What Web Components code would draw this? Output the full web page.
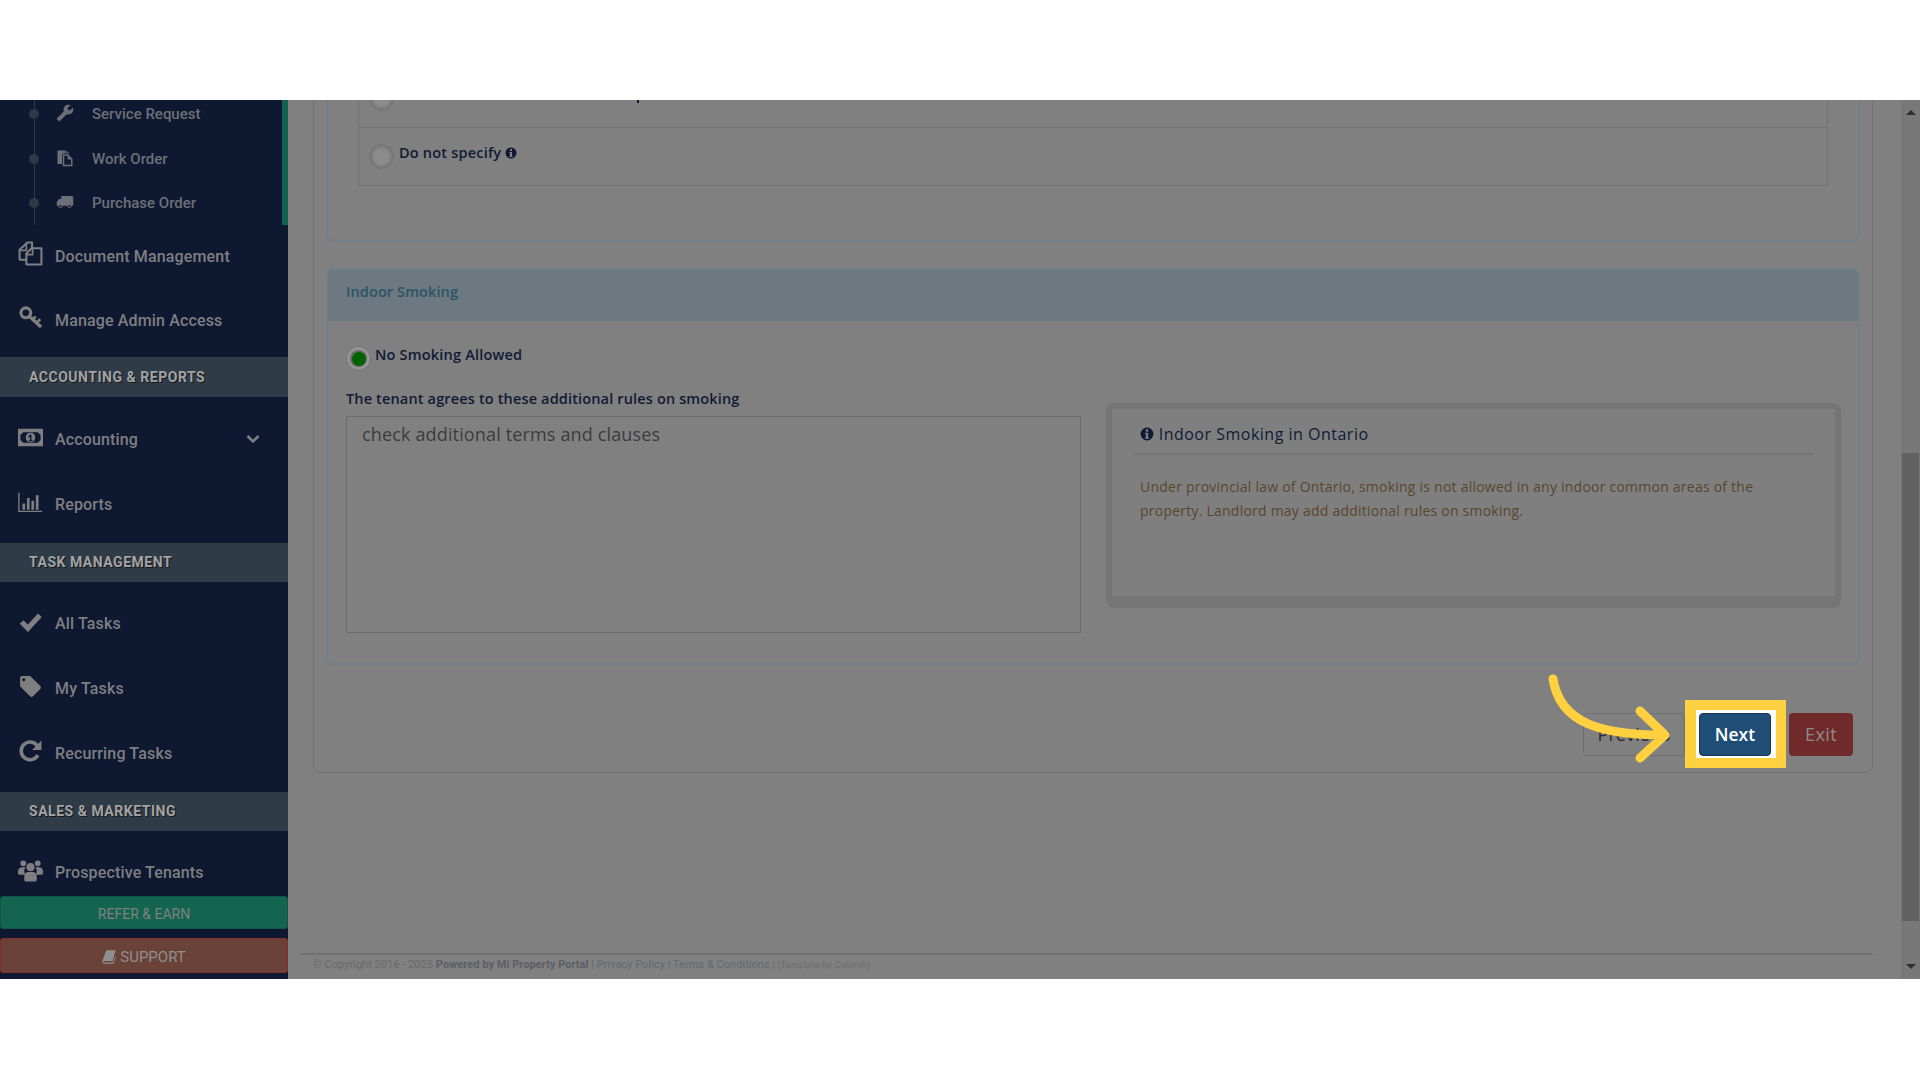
<!DOCTYPE html>
<html lang="en">
<head>
<meta charset="utf-8">
<title>Lease form</title>
<style>
  html, body { margin: 0; height: 1080px; overflow: hidden; background: #fff; }
  body { padding: 100px 0 101px; box-sizing: border-box; font-family: "Open Sans", "Liberation Sans", sans-serif; }
</style>
</head>
<body>
<app-shell>
  <side-nav slot="nav">
    <sub-list>
      <sub-item icon="wrench">Service Request</sub-item>
      <sub-item icon="files">Work Order</sub-item>
      <sub-item icon="truck">Purchase Order</sub-item>
    </sub-list>
    <nav-item icon="docs" style="height:64px">Document Management</nav-item>
    <nav-item icon="key" style="height:64px">Manage Admin Access</nav-item>
    <nav-section style="margin: 5px 0 10px; height: 40px; padding-bottom: 1px">ACCOUNTING &amp; REPORTS</nav-section>
    <nav-item icon="money" chevron>Accounting</nav-item>
    <nav-item icon="chart">Reports</nav-item>
    <nav-section style="margin: 6px 0 9px; height: 39px">TASK MANAGEMENT</nav-section>
    <nav-item icon="check">All Tasks</nav-item>
    <nav-item icon="tag">My Tasks</nav-item>
    <nav-item icon="refresh">Recurring Tasks</nav-item>
    <nav-section style="margin: 6px 0 9px; height: 39px">SALES &amp; MARKETING</nav-section>
    <nav-item icon="users">Prospective Tenants</nav-item>
    <nav-button slot="foot" kind="refer">REFER &amp; EARN</nav-button>
    <nav-button slot="foot" kind="support"><mp-icon name="book" style="width:15px;height:15px;margin-right:3px"></mp-icon>SUPPORT</nav-button>
  </side-nav>

  <lease-page>
    <form-panel plain>
      <radio-table>
        <radio-row first></radio-row>
        <radio-row>Do not specify <mp-icon name="info" style="width:12px;height:12px;vertical-align:-1px"></mp-icon></radio-row>
      </radio-table>
    </form-panel>

    <form-panel heading="Indoor Smoking">
      <smoking-form></smoking-form>
    </form-panel>

    <wizard-actions></wizard-actions>
  </lease-page>

  <fake-scrollbar slot="bar"></fake-scrollbar>
</app-shell>

<script>
const ICONS = {
  wrench: '<path transform="matrix(-1 0 0 1 24 0)" fill="currentColor" d="M22.7 19l-9.1-9.1c.9-2.3.4-5-1.5-6.9-2-2-5-2.4-7.4-1.3L9 6 6 9 1.6 4.7C.4 7.1.9 10.1 2.9 12.1c1.9 1.9 4.6 2.4 6.9 1.5l9.1 9.1c.4.4 1 .4 1.4 0l2.3-2.3c.5-.4.5-1.1.1-1.4z"/>',
  files: '<path fill="currentColor" d="M2 2h11v4h-3a2 2 0 0 0-2 2v12H2z"/><path fill="currentColor" fill-rule="evenodd" d="M9 7h7l6 6v10H9zM15.500 9H11v12h9v-7h-4.500z"/><path fill="currentColor" d="M14 2l4 4h-4z"/>',
  truck: '<g transform="matrix(-1 0 0 1 24 0)"><path fill="currentColor" d="M20 8h-3V4H3c-1.100 0-2 .9-2 2v11h2c0 1.660 1.340 3 3 3s3-1.340 3-3h6c0 1.660 1.340 3 3 3s3-1.340 3-3h2v-5z"/><circle cx="6" cy="17.500" r="1.500" fill="#0e1830"/><circle cx="18" cy="17.500" r="1.500" fill="#0e1830"/></g>',
  docs: '<path fill="none" stroke="currentColor" stroke-width="2" stroke-linejoin="round" d="M8 18H3a1.500 1.500 0 0 1-1.500-1.500V8.500L9 1.500h4.500V7"/><path fill="none" stroke="currentColor" stroke-width="2" stroke-linejoin="round" d="M8 22.500V12l5-5h9.500v15.500z"/><path fill="none" stroke="currentColor" stroke-width="1.600" d="M2 9h6V2M8 13h6V7"/>',
  key: '<g fill="none" stroke="currentColor" stroke-linecap="square"><circle cx="7.500" cy="7.500" r="4.700" stroke-width="3"/><path stroke-width="3.200" d="M11 11l10 9"/><path stroke-width="2.600" d="M17.500 17l3-2.500M14 14l2-2"/></g>',
  money: '<path fill="currentColor" fill-rule="evenodd" d="M0 3h26v18H0zM5.500 6.500L2.500 9.500v5l3 3h15l3-3v-5l-3-3z"/><path fill="currentColor" fill-rule="evenodd" d="M13 7a5 5 0 1 0 0 10 5 5 0 0 0 0-10zM12.500 9h1.500v5.500h1.200V16h-4v-1.500h1.200v-3.200l-1 .7-.8-1.100z"/>',
  chart: '<path fill="none" stroke="currentColor" stroke-width="1.500" d="M1 1v21h26"/><path fill="currentColor" d="M5 13h3v7H5zM10 7h3v13h-3zM15 10h3v10h-3zM20 4h3v16h-3z"/>',
  check: '<path fill="none" stroke="currentColor" stroke-width="5" d="M3.500 12.500l6 6L21 6"/>',
  tag: '<path fill="currentColor" d="M21.410 11.580l-9-9C12.050 2.220 11.550 2 11 2H4c-1.100 0-2 .9-2 2v7c0 .55.22 1.050.59 1.420l9 9c.36.36.86.58 1.410.58.55 0 1.050-.22 1.410-.59l7-7c.37-.36.59-.86.59-1.410 0-.55-.23-1.060-.59-1.420zM5.500 7C4.670 7 4 6.330 4 5.500S4.670 4 5.500 4 7 4.670 7 5.500 6.330 7 5.500 7z"/>',
  refresh: '<path fill="none" stroke="currentColor" stroke-width="3.400" d="M19 15.500A8.500 8.500 0 1 1 18.500 6.500"/><path fill="currentColor" d="M22.500 1.500v9h-9z"/>',
  users: '<g fill="currentColor"><circle cx="5.500" cy="5" r="3"/><circle cx="20.500" cy="5" r="3"/><circle cx="13" cy="9" r="4.200"/><path d="M0 16v-3a4.500 4.500 0 0 1 4.500-4H8a6 6 0 0 0 0 8H2a2 2 0 0 1-2-1zM26 16v-3a4.500 4.500 0 0 0-4.500-4H18a6 6 0 0 1 0 8h6a2 2 0 0 0 2-1z"/><path d="M6.500 19c0-3 2-5 4-5h5c2 0 4 2 4 5v3c0 1-1 2-2 2h-9c-1 0-2-1-2-2z"/></g>',
  book: '<path fill="currentColor" d="M7 2h15l-5 17H3.500c-1 0-1.500.7-1.200 1.500.2.6.8 1 1.700 1h14l3-10 1 1-3 11H4c-2 0-3.500-1.500-3.500-3.500 0-.7.1-1.100.4-2z"/>',
  info: '<path fill="currentColor" fill-rule="evenodd" d="M12 1a11 11 0 1 0 0 22 11 11 0 0 0 0-22zM10 4h4v4h-4zM8.500 10H14v8h1.500v2h-7v-2H10v-6H8.500z"/>'
};
const VIEW = { money: '0 0 26 24', chart: '0 0 28 24', users: '0 0 26 25' };

class MpIcon extends HTMLElement {
  connectedCallback() {
    const n = this.getAttribute('name');
    this.attachShadow({ mode: 'open' }).innerHTML = `
      <style>:host { display: inline-block; line-height: 0; } svg { width: 100%; height: 100%; display: block; }</style>
      <svg xmlns="http://www.w3.org/2000/svg" viewBox="${VIEW[n] || '0 0 24 24'}">${ICONS[n]}</svg>`;
  }
}

class AppShell extends HTMLElement {
  constructor() {
    super();
    this.attachShadow({ mode: 'open' }).innerHTML = `
      <style>
        :host { display: flex; height: 879px; background: #808080; overflow: hidden; }
        .main { flex: 1; min-width: 0; display: flex; }
      </style>
      <slot name="nav"></slot>
      <div class="main"><slot></slot></div>
      <slot name="bar"></slot>`;
  }
}

class SideNav extends HTMLElement {
  constructor() {
    super();
    this.attachShadow({ mode: 'open' }).innerHTML = `
      <style>
        :host { display: flex; flex-direction: column; width: 288px; height: 879px; background: #0e1830; flex: none; font-family: Roboto, "Liberation Sans", sans-serif; }
        .scroll { height: 796px; overflow: hidden; }
        .foot { display: flex; flex-direction: column; gap: 9px; }
      </style>
      <div class="scroll"><slot></slot></div>
      <div class="foot"><slot name="foot"></slot></div>`;
  }
}

class SubList extends HTMLElement {
  constructor() {
    super();
    this.attachShadow({ mode: 'open' }).innerHTML = `
      <style>
        :host { display: block; margin: -8px 0 -1px; height: 133px; border-right: 6px solid #11624f; position: relative; }
        .line { position: absolute; left: 34px; top: 0; bottom: 0; width: 1px; background: #2b3b45; }
      </style>
      <div class="line"></div><slot></slot>`;
  }
}

class SubItem extends HTMLElement {
  constructor() {
    super();
    this.attachShadow({ mode: 'open' }).innerHTML = `
      <style>
        :host { display: flex; align-items: center; height: 44.5px; position: relative; color: #6d6f78; font-size: 15px; font-weight: 500; }
        .dot { position: absolute; left: 29px; top: 17px; width: 10px; height: 10px; border-radius: 50%; background: #2b3b45; }
        mp-icon { width: 18px; height: 18px; margin: -2px 18px 0 56px; }
      </style>
      <span class="dot"></span><mp-icon name="${this.getAttribute('icon')}"></mp-icon><slot></slot>`;
  }
}

class NavItem extends HTMLElement {
  constructor() {
    super();
    const chev = this.hasAttribute('chevron')
      ? '<svg class="chev" viewBox="0 0 14 10"><path fill="none" stroke="currentColor" stroke-width="2.600" d="M1.500 2l5.500 5.500L12.500 2"/></svg>' : '';
    this.attachShadow({ mode: 'open' }).innerHTML = `
      <style>
        :host { display: flex; align-items: center; height: 65px; color: #7f7f82; font-size: 16px; font-weight: 500; letter-spacing: .15px; }
        mp-icon { width: 25px; height: 25px; margin: -5px 12px 0 18px; flex: none; }
        .chev { width: 14px; height: 10px; margin: -2px 28px 0 auto; }
      </style>
      <mp-icon name="${this.getAttribute('icon')}"></mp-icon><slot></slot>${chev}`;
  }
}

class NavSection extends HTMLElement {
  constructor() {
    super();
    this.attachShadow({ mode: 'open' }).innerHTML = `
      <style>
        :host { display: flex; align-items: center; box-sizing: border-box; padding: 0 0 2px 29px; background: #2f3b47; color: #a3a3a3; font-size: 14px; font-weight: 700; letter-spacing: .52px; text-shadow: 1px 1px 0 #14181c; }
      </style>
      <slot></slot>`;
  }
}

class NavButton extends HTMLElement {
  constructor() {
    super();
    this.attachShadow({ mode: 'open' }).innerHTML = `
      <style>
        :host { display: flex; align-items: center; justify-content: center; box-sizing: border-box; border-radius: 3px; color: #808080; }
        :host([kind=refer]) { height: 33px; padding-top: 3px; background: #14654f; border: 1px solid #11584a; font-size: 14px; }
        :host([kind=support]) { height: 35px; padding-top: 2px; background: #6a4237; border: 1px solid #882d28; font-size: 15px; color: #8f8f8f; }
      </style>
      <slot></slot>`;
  }
}

class LeasePage extends HTMLElement {
  constructor() {
    super();
    this.attachShadow({ mode: 'open' }).innerHTML = `
      <style>
        :host { display: flex; flex-direction: column; flex: 1; min-width: 0; height: 879px; }
        .card { margin: -45px 28px 0 25px; height: 718px; box-sizing: border-box; padding: 3px 12px 0; border: 1px solid #717171; border-radius: 0 0 7px 7px; display: flex; flex-direction: column; gap: 26px; }
        footer { margin: auto 28px 0 12px; height: 26px; box-sizing: border-box; border-top: 2px solid #717171; padding-left: 13px; font: 11.1px/20px Roboto, "Liberation Sans", sans-serif; color: #6a6a6a; white-space: nowrap; }
        b { font-weight: 700; color: #5d5f64; }
        a { color: #65696e; }
        small { font-size: 9.5px; color: #6e6e6e; }
      </style>
      <div class="card"><slot></slot></div>
      <footer>© Copyright 2016 - 2025 <b>Powered by Mi Property Portal</b> <a>| Privacy Policy | Terms &amp; Conditions</a> <small>| (Template by Colorlib)</small></footer>`;
  }
}

class FormPanel extends HTMLElement {
  constructor() {
    super();
    const h = this.getAttribute('heading');
    this.attachShadow({ mode: 'open' }).innerHTML = `
      <style>
        :host { display: block; box-sizing: border-box; border: 2px solid #708088; border-radius: 7px; }
        :host([plain]) { height: 183px; padding: 9px 30px 0; border-top-color: transparent; }
        :host(:not([plain])) { height: 397px; }
        .head { height: 51px; background: #6d7880; border-radius: 5px 5px 0 0; padding-left: 18px; font-size: 14.5px; line-height: 44px; font-weight: 600; letter-spacing: .1px; color: #2a5468; }
      </style>
      ${h ? `<div class="head">${h}</div>` : ''}<slot></slot>`;
  }
}

class RadioTable extends HTMLElement {
  constructor() {
    super();
    this.attachShadow({ mode: 'open' }).innerHTML = `
      <style>:host { display: block; border: 1px solid #737373; border-top: 0; }</style><slot></slot>`;
  }
}

const radioCss = `
  .radio { width: 25px; height: 25px; box-sizing: border-box; border-radius: 50%; background: radial-gradient(circle closest-side, #8c8c8c 0 55%, #7a7a7a 85%, #727272 96%, rgba(114,114,114,0) 100%); flex: none; display: flex; align-items: center; justify-content: center; }
  .radio.on { background: radial-gradient(circle closest-side, #6a6a6a 0 64%, #969696 72% 86%, #747474 96%, rgba(116,116,116,0) 100%); }
  .radio.on i { width: 14px; height: 14px; border-radius: 50%; background: #006400; }
`;

class RadioRow extends HTMLElement {
  constructor() {
    super();
    this.attachShadow({ mode: 'open' }).innerHTML = `
      <style>
        :host { display: flex; align-items: center; gap: 5px; height: 57px; padding-left: 10px; font-size: 14.5px; font-weight: 600; color: #101a35; letter-spacing: .2px; }
        :host([first]) { border-bottom: 1px solid #737373; box-sizing: border-box; height: 58px; }
        .txt { margin-bottom: 9px; }
        .mark { width: 2px; height: 3px; background: #101a35; align-self: flex-start; margin: 30px 0 0 238px; }
        ${radioCss}
      </style>
      <span class="radio"></span>${this.hasAttribute('first') ? '<span class="mark"></span>' : '<span class="txt"><slot></slot></span>'}`;
  }
}

class SmokingForm extends HTMLElement {
  constructor() {
    super();
    this.attachShadow({ mode: 'open' }).innerHTML = `
      <style>
        :host { display: block; padding: 24px 17px 0 18px; color: #101a35; font-size: 14.5px; font-weight: 600; letter-spacing: .15px; }
        ${radioCss}
        .opt { display: flex; align-items: center; gap: 4px; letter-spacing: .2px; }
        .opt span:last-child { margin-bottom: 8px; }
        .cols { display: grid; grid-template-columns: 735px 735px; gap: 25px; margin-top: 15px; }
        label { display: block; height: 24px; line-height: 24px; margin-bottom: 5px; }
        .area { height: 217px; box-sizing: border-box; border: 1px solid #6c6c6c; padding: 5px 15px; font-size: 18px; line-height: 24px; font-weight: 400; letter-spacing: .15px; color: #3c3c3c; }
      </style>
      <div class="opt"><span class="radio on"><i></i></span><span>No Smoking Allowed</span></div>
      <div class="cols">
        <div><label>The tenant agrees to these additional rules on smoking</label><div class="area">check additional terms and clauses</div></div>
        <info-box heading="Indoor Smoking in Ontario">Under provincial law of Ontario, smoking is not allowed in any indoor common areas of the property. Landlord may add additional rules on smoking.</info-box>
      </div>`;
  }
}

class InfoBox extends HTMLElement {
  constructor() {
    super();
    this.attachShadow({ mode: 'open' }).innerHTML = `
      <style>
        :host { display: block; box-sizing: border-box; margin-top: 16px; height: 205px; border: solid #757575; border-width: 6px 6px 12px; border-radius: 8px; padding: 0 22px; background: #7f7f7f; font-family: "Open Sans", "Liberation Sans", sans-serif; }
        h4 { margin: 0; height: 41px; padding: 3px 0 0 6px; border-bottom: 2px solid #737373; font-size: 16px; font-weight: 400; line-height: 44px; color: #101a35; letter-spacing: .5px; white-space: nowrap; }
        mp-icon { width: 14px; height: 14px; vertical-align: -1px; }
        p { margin: 19.5px 0 0 6px; font-size: 14px; font-weight: 400; line-height: 24px; color: #5a462b; letter-spacing: .23px; }
      </style>
      <h4><mp-icon name="info"></mp-icon> ${this.getAttribute('heading')}</h4>
      <p><slot></slot></p>`;
  }
}

class WizardActions extends HTMLElement {
  constructor() {
    super();
    this.attachShadow({ mode: 'open' }).innerHTML = `
      <style>
        :host { display: flex; justify-content: flex-end; align-items: flex-start; position: relative; margin-top: 22px; padding-right: 7px; font-size: 18px; }
        .btn { height: 43px; box-sizing: border-box; border-radius: 4px; padding-bottom: 1px; display: flex; align-items: center; justify-content: center; }
        .prev { width: 102px; border: 1px solid #6e6e6e; color: #2a2a2a; font-weight: 400; letter-spacing: .1px; }
        .focus { position: relative; width: 72px; margin: 0 18px 0 14px; }
        .focus::before { content: ""; position: absolute; left: -14px; right: -15px; top: -13px; bottom: -12px; background: #ffd040; }
        .focus::after { content: ""; position: absolute; left: -3px; right: -5px; top: -3px; bottom: -2px; background: #fff; }
        .next { position: relative; z-index: 1; width: 72px; background: #1f4d75; border: 1px solid #17375a; color: #fff; font-weight: 600; font-size: 17.5px; letter-spacing: .1px; }
        .exit { width: 64px; background: #702a2a; color: #8d8d8d; letter-spacing: .4px; }
        svg { position: absolute; left: 1224px; top: -40px; width: 130px; height: 90px; overflow: visible; z-index: 2; }
      </style>
      <div class="btn prev">Previous</div>
      <div class="focus"><div class="btn next">Next</div></div>
      <div class="btn exit">Exit</div>
      <svg viewBox="0 0 130 90"><path fill="none" stroke="#ffd040" stroke-width="9" stroke-linecap="round" stroke-linejoin="round" d="M3 6C10 50 50 62 115 62M90 38l25 24-25 23"/></svg>`;
  }
}

class FakeScrollbar extends HTMLElement {
  constructor() {
    super();
    this.attachShadow({ mode: 'open' }).innerHTML = `
      <style>
        :host { display: flex; flex-direction: column; align-items: center; width: 19px; flex: none; height: 879px; background: #787878; box-sizing: border-box; padding-top: 10px; }
        .up, .down { width: 0; height: 0; border: 5px solid transparent; }
        .up { border-top: 0; border-bottom: 5px solid #2f2f2f; }
        .down { border-bottom: 0; border-top: 5px solid #2f2f2f; margin-top: 43px; }
        .thumb { width: 17px; height: 468px; background: #616161; margin-top: 338px; }
      </style>
      <div class="up"></div><div class="thumb"></div><div class="down"></div>`;
  }
}

customElements.define('mp-icon', MpIcon);
customElements.define('app-shell', AppShell);
customElements.define('side-nav', SideNav);
customElements.define('sub-list', SubList);
customElements.define('sub-item', SubItem);
customElements.define('nav-item', NavItem);
customElements.define('nav-section', NavSection);
customElements.define('nav-button', NavButton);
customElements.define('lease-page', LeasePage);
customElements.define('form-panel', FormPanel);
customElements.define('radio-table', RadioTable);
customElements.define('radio-row', RadioRow);
customElements.define('smoking-form', SmokingForm);
customElements.define('info-box', InfoBox);
customElements.define('wizard-actions', WizardActions);
customElements.define('fake-scrollbar', FakeScrollbar);
</script>
</body>
</html>
